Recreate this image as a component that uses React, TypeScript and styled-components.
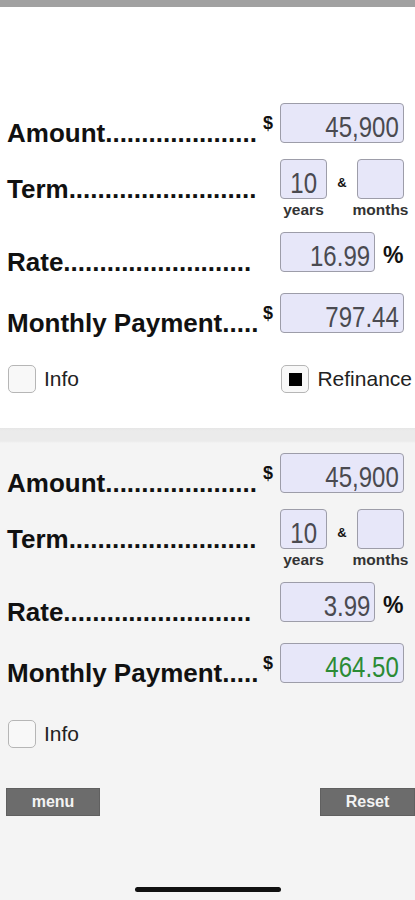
import styled, { createGlobalStyle } from "styled-components";

const GlobalStyle = createGlobalStyle`
  html, body {
    margin: 0;
    padding: 0;
  }
  body {
    background: #f4f4f4;
    font-family: "Liberation Sans", Arial, sans-serif;
  }
`;

const Screen = styled.div`
  width: 415px;
  min-height: 900px;
  display: flex;
  flex-direction: column;
  background: #fff;
`;

const StatusStrip = styled.div`
  height: 7px;
  background: #a1a1a1;
`;

const Panel = styled.section<{ $shade?: boolean }>`
  display: flex;
  flex-direction: column;
  background: ${(p) =>
    p.$shade
      ? "linear-gradient(#e6e6e6 0, #ebebeb 3px, #ebebeb 13px, #f4f4f4 15px)"
      : "#fff"};
  padding: ${(p) => (p.$shade ? "25px 0 0" : "96px 0 35px")};
  flex: ${(p) => (p.$shade ? 1 : "none")};
`;

const Row = styled.div<{ $top?: number }>`
  display: flex;
  align-items: flex-start;
  margin-top: ${(p) => p.$top ?? 0}px;
  padding: 0 11px 0 7px;
`;

const Label = styled.div`
  flex: 1;
  min-width: 0;
  margin: 17px 0 -3px;
  font: bold 26px/26px "Liberation Sans", Arial, sans-serif;
  color: #111;
  white-space: nowrap;
`;

const Controls = styled.div<{ $indent?: number }>`
  flex: none;
  width: 142px;
  box-sizing: border-box;
  padding-left: ${(p) => p.$indent ?? 0}px;
  display: flex;
  align-items: flex-start;
`;

const Dollar = styled.span`
  width: 18px;
  flex: none;
  margin-top: 11px;
  padding-left: 1px;
  box-sizing: border-box;
  font: bold 18px/18px "Liberation Sans", Arial, sans-serif;
  color: #111;
`;

const Field = styled.div<{ $w: number; $center?: boolean; $green?: boolean }>`
  box-sizing: border-box;
  flex: none;
  width: ${(p) => p.$w}px;
  height: 40px;
  padding: 8px 4px 0;
  border: 1px solid #9d9da9;
  border-radius: 4px;
  background: #e7e7f9;
  color: ${(p) => (p.$green ? "#2b8b35" : "#4a4a50")};
  font: 30px/29px "Liberation Sans", Arial, sans-serif;
  display: flex;
  justify-content: ${(p) => (p.$center ? "center" : "flex-end")};
  white-space: nowrap;
`;

/* the app uses a narrow face; squeeze the regular one to its width */
const Digits = styled.span<{ $center?: boolean }>`
  display: inline-block;
  transform: scaleX(0.8);
  transform-origin: ${(p) => (p.$center ? "center" : "right")};
`;

const Percent = styled.span`
  margin: 12px 0 0 8px;
  font: bold 23px/23px "Liberation Sans", Arial, sans-serif;
  color: #111;
`;

const TermGrid = styled.div`
  display: grid;
  grid-template-columns: 47px 1fr 47px;
  width: 124px;
`;

const Amp = styled.span`
  justify-self: center;
  margin-top: 17px;
  font: bold 13px/13px "Liberation Sans", Arial, sans-serif;
  color: #111;
`;

const Unit = styled.span`
  display: flex;
  justify-content: center;
  margin-top: 3px;
  font: bold 15.5px/16px "Liberation Sans", Arial, sans-serif;
  color: #333;
  white-space: nowrap;
`;

const CheckRow = styled.div<{ $top: number }>`
  display: flex;
  justify-content: space-between;
  align-items: center;
  margin-top: ${(p) => p.$top}px;
  padding: 0 3px 0 8px;
`;

const CheckItem = styled.label`
  display: flex;
  align-items: center;
  gap: 8px;
  font: 21px/28px "Liberation Sans", Arial, sans-serif;
  color: #222;
`;

const Box = styled.span<{ $checked?: boolean }>`
  box-sizing: border-box;
  width: 28px;
  height: 28px;
  border: 1px solid #b6b6b6;
  border-radius: 5px;
  background: #f8f8f8;
  display: flex;
  align-items: center;
  justify-content: center;
  &::after {
    content: "";
    display: ${(p) => (p.$checked ? "block" : "none")};
    width: 13px;
    height: 13px;
    background: #000;
  }
`;

const ButtonRow = styled.div`
  display: flex;
  justify-content: space-between;
  margin-top: 40px;
  padding-left: 6px;
`;

const GrayButton = styled.button<{ $w: number }>`
  width: ${(p) => p.$w}px;
  height: 28px;
  border: 1px solid #606060;
  border-radius: 0;
  background: #6c6c6c;
  color: #f3f3f3;
  font: bold 16px/1 "Liberation Sans", Arial, sans-serif;
  padding: 0;
`;

const HomeIndicator = styled.div`
  width: 146px;
  height: 5px;
  border-radius: 3px;
  background: #111;
  margin: 71px auto 0;
`;

type CalcProps = {
  rate: string;
  payment: string;
  green?: boolean;
};

function Calculator({ rate, payment, green }: CalcProps) {
  return (
    <>
      <Row>
        <Label>Amount.....................</Label>
        <Controls>
          <Dollar>$</Dollar>
          <Field $w={124}>
            <Digits>45,900</Digits>
          </Field>
        </Controls>
      </Row>
      <Row $top={16}>
        <Label>Term..........................</Label>
        <Controls $indent={18}>
          <TermGrid>
            <Field $w={47} $center>
              <Digits $center>10</Digits>
            </Field>
            <Amp>&amp;</Amp>
            <Field $w={47} $center />
            <Unit>years</Unit>
            <span />
            <Unit>months</Unit>
          </TermGrid>
        </Controls>
      </Row>
      <Row $top={14}>
        <Label>Rate..........................</Label>
        <Controls $indent={18}>
          <Field $w={95}>
            <Digits>{rate}</Digits>
          </Field>
          <Percent>%</Percent>
        </Controls>
      </Row>
      <Row $top={21}>
        <Label>Monthly Payment.....</Label>
        <Controls>
          <Dollar>$</Dollar>
          <Field $w={124} $green={green}>
            <Digits>{payment}</Digits>
          </Field>
        </Controls>
      </Row>
    </>
  );
}

export default function App() {
  return (
    <Screen>
      <GlobalStyle />
      <StatusStrip />
      <Panel>
        <Calculator rate="16.99" payment="797.44" />
        <CheckRow $top={32}>
          <CheckItem>
            <Box />
            Info
          </CheckItem>
          <CheckItem>
            <Box $checked />
            Refinance
          </CheckItem>
        </CheckRow>
      </Panel>
      <Panel $shade>
        <Calculator rate="3.99" payment="464.50" green />
        <CheckRow $top={37}>
          <CheckItem>
            <Box />
            Info
          </CheckItem>
        </CheckRow>
        <ButtonRow>
          <GrayButton $w={94}>menu</GrayButton>
          <GrayButton $w={95}>Reset</GrayButton>
        </ButtonRow>
        <HomeIndicator />
      </Panel>
    </Screen>
  );
}
